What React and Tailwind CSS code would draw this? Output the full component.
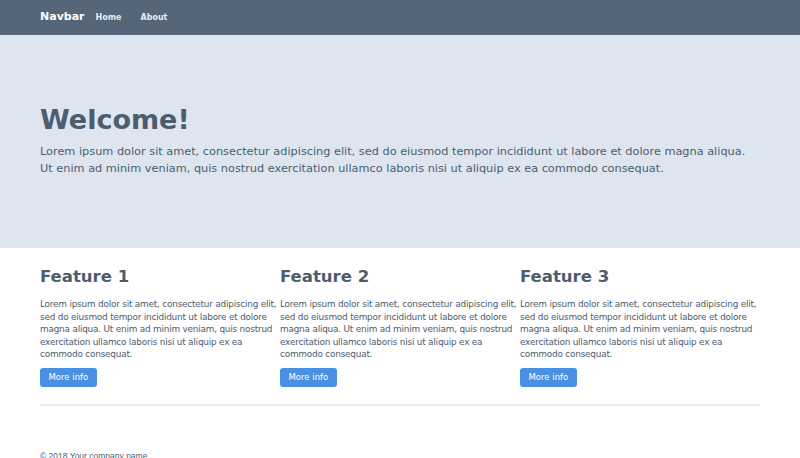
export default function App() {
  const features = ["Feature 1", "Feature 2", "Feature 3"];
  const lorem =
    "Lorem ipsum dolor sit amet, consectetur adipiscing elit, sed do eiusmod tempor incididunt ut labore et dolore magna aliqua. Ut enim ad minim veniam, quis nostrud exercitation ullamco laboris nisi ut aliquip ex ea commodo consequat.";

  return (
    <div className="min-h-screen bg-white text-[#4b5d6e] font-['DejaVu_Sans',sans-serif]">
      {/* navbar */}
      <nav className="h-[35px] bg-[#546678] flex items-center">
        <div className="w-[720px] mx-auto flex items-center">
          <span className="text-white font-bold text-[11px] mr-[11px]">Navbar</span>
          <a className="text-[#e8edf2] font-bold text-[8px] mr-[19px]">Home</a>
          <a className="text-[#e8edf2] font-bold text-[8px]">About</a>
        </div>
      </nav>

      {/* hero */}
      <section className="h-[213px] bg-[#dee5ee] pt-[71px]">
        <div className="w-[720px] mx-auto">
          <h1 className="text-[27px] font-bold leading-none mb-[11px]">Welcome!</h1>
          <p className="text-[11.3px] leading-[16.7px]">
            Lorem ipsum dolor sit amet, consectetur adipiscing elit, sed do eiusmod tempor incididunt ut labore et dolore magna aliqua.
            <br />
            Ut enim ad minim veniam, quis nostrud exercitation ullamco laboris nisi ut aliquip ex ea commodo consequat.
          </p>
        </div>
      </section>

      {/* features */}
      <main className="w-[720px] mx-auto pt-[19px]">
        <div className="grid grid-cols-3">
          {features.map((f) => (
            <div key={f}>
              <h2 className="text-[16.5px] font-bold leading-[20px] mb-[11px]">{f}</h2>
              <p className="text-[8.9px] leading-[12.6px] tracking-[-0.2px] mb-[7px] w-[240px]">{lorem}</p>
              <button className="block bg-[#4a90e2] text-white text-[8.5px] h-[19px] px-[8.5px] rounded-[3px]">
                More info
              </button>
            </div>
          ))}
        </div>
        <hr className="mt-[17px] border-t-2 border-[#e6ebf0]" />
        <footer className="pt-[45px] text-[8.5px] leading-[10px] font-['Liberation_Sans',sans-serif]">
          © 2018 Your company name.
        </footer>
      </main>
    </div>
  );
}
